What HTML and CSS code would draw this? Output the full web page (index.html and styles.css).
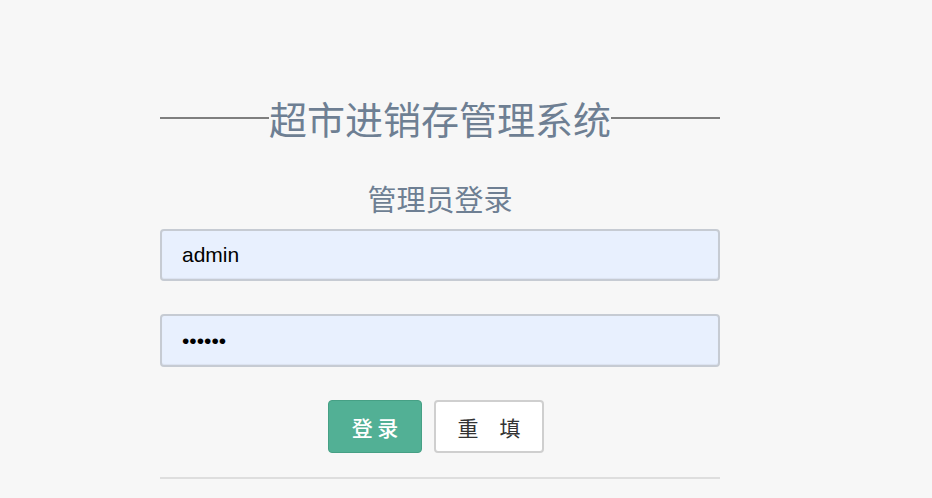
FILE: index.html
```html
<!DOCTYPE html>
<html lang="zh">
<head>
<meta charset="utf-8">
<title>超市进销存管理系统</title>
<link rel="stylesheet" href="styles.css">
</head>
<body>
<div class="login">
  <h1 class="title"><span class="rule"></span><span class="title-text">超市进销存管理系统</span><span class="rule"></span></h1>
  <h2 class="subtitle">管理员登录</h2>
  <form class="form">
    <input class="field" type="text" value="admin">
    <input class="field" type="password" value="123456">
    <div class="actions">
      <button type="button" class="btn btn-primary">登 录</button>
      <button type="reset" class="btn btn-default">重　填</button>
    </div>
  </form>
  <div class="divider"></div>
</div>
</body>
</html>
```

FILE: styles.css
```css
html, body {
  margin: 0;
  padding: 0;
  background: #f7f7f7;
  font-family: "Liberation Sans", "Noto Sans CJK SC", sans-serif;
}

.login {
  width: 560px;
  margin-left: 160px;
  padding-top: 96px;
}

.title {
  display: flex;
  align-items: center;
  margin: 0;
  font-weight: normal;
  font-size: 38px;
  line-height: 44px;
  color: #6e7f93;
  font-family: "Noto Sans CJK SC", sans-serif;
}

.rule {
  flex: 1;
  height: 2px;
  background: #7f7f7f;
}

.subtitle {
  margin: 38px 0 0;
  text-align: center;
  font-weight: normal;
  font-size: 29px;
  line-height: 41px;
  color: #6e7f93;
  font-family: "Noto Sans CJK SC", sans-serif;
}

.form {
  margin: 10px 0 0;
  display: flex;
  flex-direction: column;
}

.field {
  box-sizing: border-box;
  width: 560px;
  height: 52px;
  margin: 0 0 33px;
  padding: 0 20px;
  border: 2px solid #c6cbd3;
  border-radius: 4px;
  background: #e8f0fe;
  box-shadow: inset 0 -1px 1px rgba(0, 0, 0, 0.06);
  font-family: "Liberation Sans", sans-serif;
  font-size: 21px;
  color: #000;
  outline: none;
}

.field + .field {
  height: 53px;
}

.actions {
  display: flex;
  justify-content: center;
  gap: 12px;
  padding-right: 8px;
}

.btn {
  box-sizing: border-box;
  height: 53px;
  border-radius: 4px;
  font-family: "Noto Sans CJK SC", sans-serif;
  font-size: 21px;
  cursor: pointer;
  padding: 0;
}

.btn-primary {
  width: 94px;
  background: #52b095;
  border: 1px solid #46a085;
  color: #fff;
  font-weight: 500;
}

.btn-default {
  width: 110px;
  background: #fff;
  border: 2px solid #cfcfcf;
  color: #333;
}

.divider {
  margin-top: 24px;
  height: 2px;
  background: #dedede;
}
```
